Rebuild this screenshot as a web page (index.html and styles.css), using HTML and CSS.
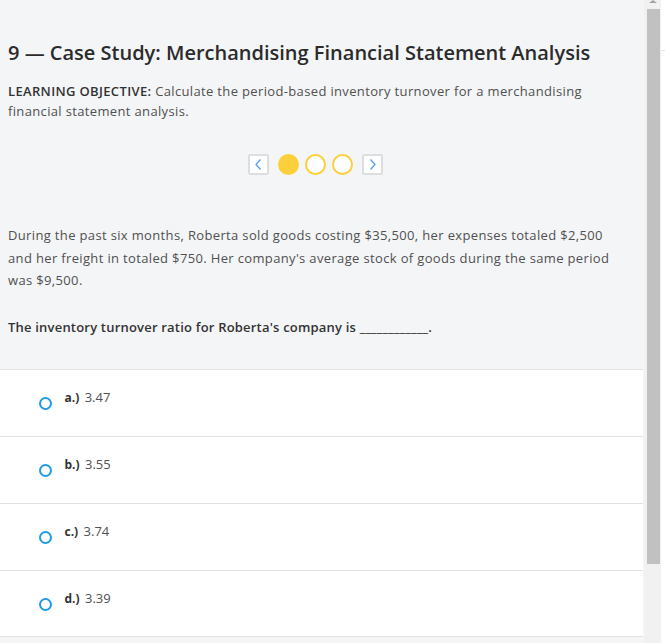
FILE: index.html
```html
<!DOCTYPE html>
<html>
<head>
<meta charset="utf-8">
<link rel="stylesheet" href="styles.css">
</head>
<body>
<div class="frame">
  <div class="page">
    <div class="head">
      <h1 class="title">9 — Case Study: Merchandising Financial Statement Analysis</h1>
      <p class="objective"><span class="obj-label">LEARNING OBJECTIVE:</span> Calculate the period-based inventory turnover for a merchandising financial statement analysis.</p>
    </div>
    <div class="pager">
      <span class="nav-box">
        <svg width="11" height="13" viewBox="0 0 11 13"><path d="M7.5 1.5 L3 6.5 L7.5 11.5" fill="none" stroke="#4a9ee8" stroke-width="1.2"/></svg>
      </span>
      <span class="dot dot-filled"></span>
      <span class="dot"></span>
      <span class="dot"></span>
      <span class="nav-box">
        <svg width="11" height="13" viewBox="0 0 11 13"><path d="M3.5 1.5 L8 6.5 L3.5 11.5" fill="none" stroke="#4a9ee8" stroke-width="1.2"/></svg>
      </span>
    </div>
    <div class="question">
      <p class="scenario">During the past six months, Roberta sold goods costing $35,500, her expenses totaled $2,500 and her freight in totaled $750. Her company's average stock of goods during the same period was $9,500.</p>
      <p class="prompt">The inventory turnover ratio for Roberta's company is ____________.</p>
    </div>
    <div class="answers">
      <div class="answer"><span class="radio"></span><span class="choice"><b>a.)</b> 3.47</span></div>
      <div class="answer"><span class="radio"></span><span class="choice"><b>b.)</b> 3.55</span></div>
      <div class="answer"><span class="radio"></span><span class="choice"><b>c.)</b> 3.74</span></div>
      <div class="answer"><span class="radio"></span><span class="choice"><b>d.)</b> 3.39</span></div>
    </div>
  </div>
  <div class="scrollbar">
    <div class="scroll-arrow"></div>
    <div class="scroll-thumb"></div>
  </div>
  <div class="edge"><div class="edge-line"></div></div>
</div>
</body>
</html>
```

FILE: styles.css
```css
html, body {
  margin: 0;
  padding: 0;
  background: #ffffff;
}

.frame {
  display: flex;
  height: 643px;
  overflow: hidden;
  font-family: "Open Sans", "Lato", sans-serif;
}

.page {
  width: 644px;
  flex: none;
  background: #f4f5f7;
  color: #4a4a4a;
}

.head {
  padding: 38px 21px 0 8px;
}

.title {
  margin: 0;
  font-size: 20px;
  line-height: 30px;
  font-weight: 600;
  color: #2b2b2b;
  white-space: nowrap;
}

.objective {
  margin: 14px 0 0 0;
  font-size: 13px;
  line-height: 19.5px;
  letter-spacing: 0.35px;
  color: #505050;
}

.obj-label {
  font-weight: 600;
  color: #333;
}

.pager {
  display: flex;
  align-items: center;
  justify-content: center;
  margin-top: 32px;
  padding: 0 21px 0 8px;
  height: 22px;
}

.nav-box {
  width: 17px;
  height: 17px;
  border: 2px solid #dedede;
  border-radius: 2px;
  background: #fff;
  display: flex;
  align-items: center;
  justify-content: center;
}

.dot {
  width: 17px;
  height: 17px;
  border: 2px solid #fcd03b;
  border-radius: 50%;
  background: #fff;
  margin: 0 3px;
}

.dot:nth-child(2) {
  margin-left: 9px;
}

.dot:nth-child(4) {
  margin-right: 9px;
}

.dot-filled {
  background: #fcd03b;
}

.question {
  padding: 0 21px 0 8px;
  margin-top: 49px;
}

.scenario {
  margin: 0;
  font-size: 13px;
  line-height: 22.5px;
  letter-spacing: 0.35px;
  color: #505050;
}

.prompt {
  margin: 24px 0 0 0;
  font-size: 13px;
  line-height: 22px;
  letter-spacing: 0.2px;
  font-weight: 600;
  color: #333;
}

.answers {
  margin-top: 31px;
  width: 643px;
}

.answer {
  border-top: 1px solid #e2e2e2;
  background: #fff;
  display: flex;
  align-items: flex-start;
  padding-top: 17px;
  box-sizing: border-box;
  height: 67px;
}

.answer:last-child {
  border-bottom: 1px solid #e2e2e2;
  height: 67px;
}

.radio {
  width: 9px;
  height: 9px;
  border: 2px solid #1e9be6;
  border-radius: 50%;
  margin: 10px 0 0 38.5px;
  flex: none;
}

.choice {
  margin-left: 13px;
  font-size: 13px;
  line-height: 20px;
  color: #505050;
}

.choice b {
  font-size: 12px;
  font-weight: 700;
  color: #333;
  margin-right: 2px;
}

.scrollbar {
  width: 17px;
  flex: none;
  background: #f1f1f1;
  display: flex;
  flex-direction: column;
  align-items: center;
}

.scroll-arrow {
  width: 0;
  height: 0;
  border-left: 4px solid transparent;
  border-right: 4px solid transparent;
  border-bottom: 3px solid #a3a3a3;
}

.scroll-thumb {
  width: 13px;
  height: 555px;
  margin-top: 6px;
  margin-left: 1px;
  background: #c1c1c1;
}

.edge {
  flex: 1;
  background: #fff;
}

.edge-line {
  margin-top: 50px;
  border-top: 1px solid #e4e4e4;
}
```
